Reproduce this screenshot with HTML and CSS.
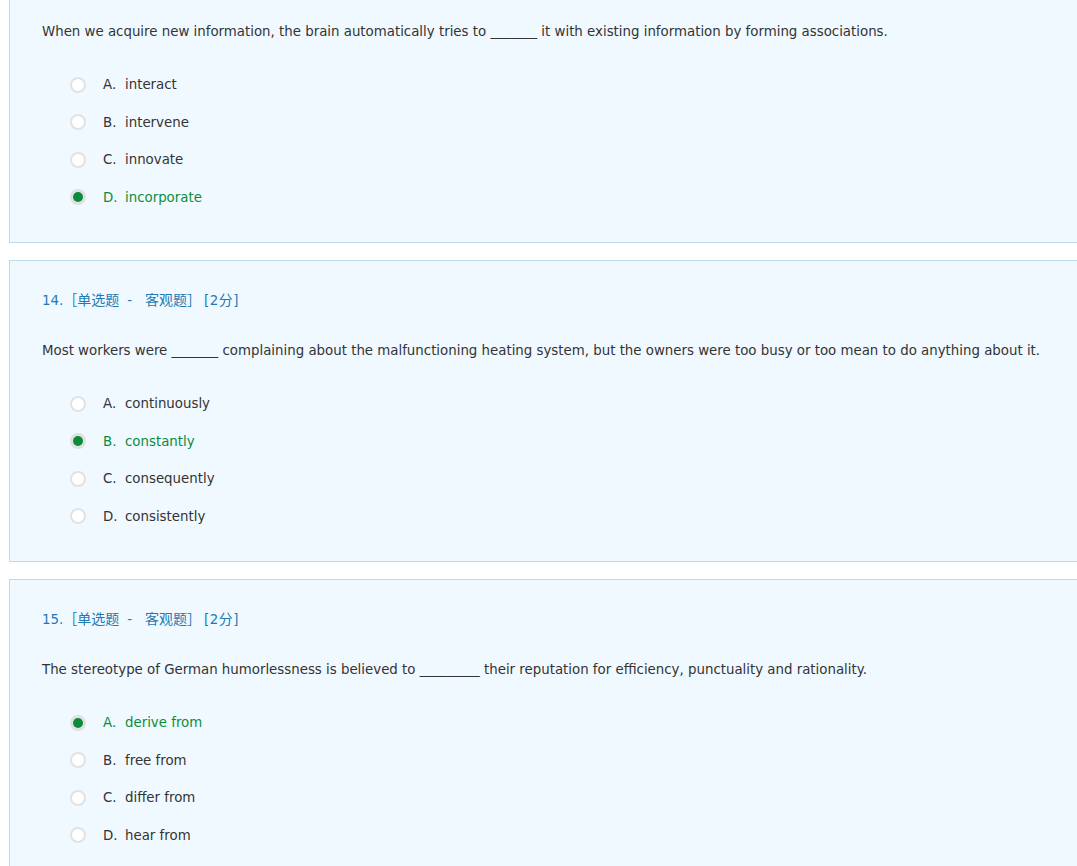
FILE: index.html
```html
<!DOCTYPE html>
<html lang="zh">
<head>
<meta charset="utf-8">
<title>Quiz</title>
<link rel="stylesheet" href="styles.css">
</head>
<body>
<div class="page">
  <div class="question">
    <div class="q-head">13.<span class="cjk">［单选题</span><span class="dash">-</span><span class="cjk">客观题］</span><span class="pts">[2<span class="cjk">分</span>]</span></div>
    <div class="q-text">When we acquire new information, the brain automatically tries to _______ it with existing information by forming associations.</div>
    <ul class="options">
      <li class="opt"><span class="radio"></span><span class="letter">A.</span><span class="word">interact</span></li>
      <li class="opt"><span class="radio"></span><span class="letter">B.</span><span class="word">intervene</span></li>
      <li class="opt"><span class="radio"></span><span class="letter">C.</span><span class="word">innovate</span></li>
      <li class="opt checked"><span class="radio"></span><span class="letter">D.</span><span class="word">incorporate</span></li>
    </ul>
  </div>
  <div class="question">
    <div class="q-head">14.<span class="cjk">［单选题</span><span class="dash">-</span><span class="cjk">客观题］</span><span class="pts">[2<span class="cjk">分</span>]</span></div>
    <div class="q-text">Most workers were _______ complaining about the malfunctioning heating system, but the owners were too busy or too mean to do anything about it.</div>
    <ul class="options">
      <li class="opt"><span class="radio"></span><span class="letter">A.</span><span class="word">continuously</span></li>
      <li class="opt checked"><span class="radio"></span><span class="letter">B.</span><span class="word">constantly</span></li>
      <li class="opt"><span class="radio"></span><span class="letter">C.</span><span class="word">consequently</span></li>
      <li class="opt"><span class="radio"></span><span class="letter">D.</span><span class="word">consistently</span></li>
    </ul>
  </div>
  <div class="question">
    <div class="q-head">15.<span class="cjk">［单选题</span><span class="dash">-</span><span class="cjk">客观题］</span><span class="pts">[2<span class="cjk">分</span>]</span></div>
    <div class="q-text">The stereotype of German humorlessness is believed to _________ their reputation for efficiency, punctuality and rationality.</div>
    <ul class="options">
      <li class="opt checked"><span class="radio"></span><span class="letter">A.</span><span class="word">derive from</span></li>
      <li class="opt"><span class="radio"></span><span class="letter">B.</span><span class="word">free from</span></li>
      <li class="opt"><span class="radio"></span><span class="letter">C.</span><span class="word">differ from</span></li>
      <li class="opt"><span class="radio"></span><span class="letter">D.</span><span class="word">hear from</span></li>
    </ul>
  </div>
</div>
</body>
</html>
```

FILE: styles.css
```css
html, body {
  margin: 0;
  padding: 0;
  background: #ffffff;
  overflow: hidden;
}
body {
  font-family: "DejaVu Sans", "Noto Sans CJK SC", sans-serif;
  font-size: 13.35px;
  color: #333333;
}
.page {
  margin-top: -59px;
  padding-left: 9px;
  margin-right: -20px;
}
.question {
  background: #f0f9ff;
  border: 1px solid #bcdbe8;
  padding: 28px 32px 26px 32px;
  margin-bottom: 17px;
}
.q-head {
  line-height: 20px;
  height: 20px;
  color: #1e7ab4;
  white-space: nowrap;
}
.cjk {
  font-family: "Noto Sans CJK SC", sans-serif;
  font-size: 14px;
}
.dash {
  margin: 0 13px 0 8px;
}
.pts {
  margin-left: 3px;
  letter-spacing: 0.5px;
}
.q-text {
  margin-top: 32px;
  line-height: 20px;
  white-space: nowrap;
}
.options {
  list-style: none;
  margin: 24px 0 0 0;
  padding: 0 0 0 28px;
}
.opt {
  height: 37.5px;
  display: flex;
  align-items: center;
}
.radio {
  box-sizing: border-box;
  width: 16px;
  height: 16px;
  border-radius: 50%;
  border: 2px solid #e2e2e2;
  background: #ffffff;
  margin-right: 17px;
  display: flex;
  align-items: center;
  justify-content: center;
  flex: none;
}
.checked .radio {
  background: #e4e4e4;
  border-color: #e0e0e0;
}
.checked .radio::after {
  content: "";
  width: 10px;
  height: 10px;
  border-radius: 50%;
  background: #0b8c3c;
}
.letter {
  width: 22px;
  flex: none;
}
.checked {
  color: #0b8c3c;
}
```
